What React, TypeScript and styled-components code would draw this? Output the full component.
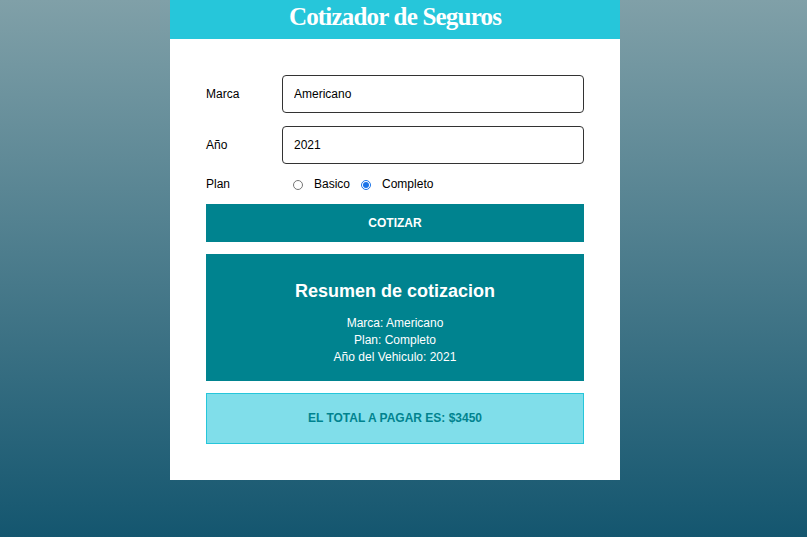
import React from "react";
import styled, { createGlobalStyle } from "styled-components";

const GlobalStyle = createGlobalStyle`
  html, body { margin: 0; padding: 0; }
  body {
    font-family: "Liberation Sans", Arial, sans-serif;
    background: linear-gradient(to bottom, #80a0a8 0%, #14566f 100%);
    min-height: 100vh;
  }
`;

const Page = styled.div`
  min-height: 537px;
  padding-right: 17px;
  box-sizing: border-box;
`;

const Container = styled.div`
  width: 450px;
  margin: 0 auto;
`;

const Header = styled.header`
  background: #26c6da;
  height: 39px;
  display: flex;
  align-items: center;
  justify-content: center;
`;

const Title = styled.h1`
  margin: 0;
  color: #fff;
  font-family: "Liberation Serif", "Times New Roman", serif;
  font-weight: 700;
  font-size: 25px;
  letter-spacing: -0.8px;
  line-height: 1;
  transform: translateY(-3px);
`;

const Form = styled.form`
  background: #fff;
  padding: 36px;
  display: flex;
  flex-direction: column;
`;

const Field = styled.div<{ $gap?: number }>`
  display: flex;
  align-items: center;
  margin-bottom: ${(p) => p.$gap ?? 13}px;
`;

const Label = styled.label`
  flex: 0 0 76px;
  font-size: 12px;
  color: #000;
`;

const Input = styled.input`
  flex: 1;
  height: 38px;
  box-sizing: border-box;
  border: 1px solid #333;
  border-radius: 4px;
  padding: 0 11px;
  font-family: "Liberation Sans", Arial, sans-serif;
  font-size: 12px;
  color: #000;
  outline: none;
`;

const Radio = styled.input`
  width: 10px;
  height: 10px;
  margin: 2px 11px 0 11px;
  accent-color: #1a73e8;
`;

const RadioText = styled.span`
  font-size: 12px;
  color: #000;
`;

const Button = styled.button`
  height: 38px;
  border: none;
  background: #00838f;
  color: #fff;
  font-family: "Liberation Sans", Arial, sans-serif;
  font-weight: 700;
  font-size: 12px;
  text-transform: uppercase;
  margin: 0;
  padding: 0;
`;

const Summary = styled.div`
  margin-top: 12px;
  background: #00838f;
  color: #fff;
  text-align: center;
  padding: 27px 0 15px;
`;

const SummaryTitle = styled.h2`
  margin: 0 0 13px;
  font-size: 18px;
  line-height: 21px;
  font-weight: 700;
`;

const SummaryLine = styled.p`
  margin: 0;
  font-size: 12px;
  line-height: 17px;
`;

const Total = styled.div`
  margin-top: 12px;
  background: #80deea;
  border: 1px solid #26c6da;
  color: #00838f;
  text-align: center;
  font-weight: 700;
  font-size: 12px;
  line-height: 17px;
  padding: 16px 0 16px;
`;

export default function App() {
  return (
    <>
      <GlobalStyle />
      <Page>
        <Container>
          <Header>
            <Title>Cotizador de Seguros</Title>
          </Header>
          <Form onSubmit={(e) => e.preventDefault()}>
            <Field>
              <Label>Marca</Label>
              <Input defaultValue="Americano" />
            </Field>
            <Field $gap={13}>
              <Label>Año</Label>
              <Input defaultValue="2021" />
            </Field>
            <Field $gap={13}>
              <Label>Plan</Label>
              <Radio type="radio" name="plan" value="basico" />
              <RadioText>Basico</RadioText>
              <Radio type="radio" name="plan" value="completo" defaultChecked />
              <RadioText>Completo</RadioText>
            </Field>
            <Button type="submit">Cotizar</Button>
            <Summary>
              <SummaryTitle>Resumen de cotizacion</SummaryTitle>
              <SummaryLine>Marca: Americano</SummaryLine>
              <SummaryLine>Plan: Completo</SummaryLine>
              <SummaryLine>Año del Vehiculo: 2021</SummaryLine>
            </Summary>
            <Total>EL TOTAL A PAGAR ES: $3450</Total>
          </Form>
        </Container>
      </Page>
    </>
  );
}
